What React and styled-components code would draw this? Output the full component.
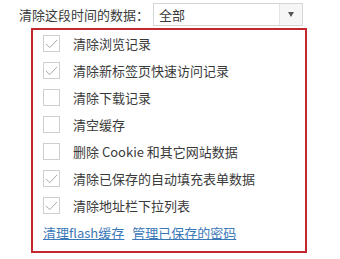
import React, { useState } from 'react';
import styled, { createGlobalStyle } from 'styled-components';

const GlobalStyle = createGlobalStyle`
  body {
    margin: 0;
    background: #fff;
    font-family: "Noto Sans CJK SC", "Noto Sans", sans-serif;
    color: #3a3a3a;
  }
`;

const Page = styled.div`
  width: 340px;
  height: 259px;
  padding-top: 3px;
  box-sizing: border-box;
`;

const RangeRow = styled.div`
  display: flex;
  align-items: center;
  height: 23px;
  padding-left: 19px;
`;

const RangeLabel = styled.span`
  font-size: 13px;
  width: 134px;
  white-space: nowrap;
`;

const Select = styled.div`
  display: flex;
  width: 150px;
  height: 23px;
  box-sizing: border-box;
  border: 1px solid #d6d6d6;
  background: #fff;
`;

const SelectValue = styled.span`
  flex: 1;
  font-size: 13px;
  line-height: 21px;
  padding-left: 5px;
`;

const SelectArrow = styled.span`
  width: 22px;
  display: flex;
  align-items: center;
  justify-content: center;
  background: #f6f6f6;
  border-left: 1px solid #e4e4e4;
  &::after {
    content: '';
    border-left: 3.5px solid transparent;
    border-right: 3.5px solid transparent;
    border-top: 5px solid #555;
  }
`;

const Panel = styled.div`
  margin: 2px 0 0 31px;
  width: 276px;
  height: 225px;
  box-sizing: border-box;
  border: 2px solid #c1272d;
  padding-left: 10px;
`;

const Row = styled.label`
  display: flex;
  align-items: center;
  height: 27px;
  font-size: 13px;
  cursor: pointer;
`;

const Box = styled.span`
  width: 17px;
  height: 17px;
  box-sizing: border-box;
  border: 1px solid #cfcfcf;
  background: #fff;
  margin-right: 13px;
  display: flex;
  align-items: center;
  justify-content: center;
`;

const Links = styled.div`
  display: flex;
  align-items: center;
  gap: 8px;
  height: 27px;
  font-size: 13px;
`;

const Link = styled.a`
  color: #3b78b8;
  text-decoration: underline;
  cursor: pointer;
`;

const items = [
  { label: '清除浏览记录', checked: true },
  { label: '清除新标签页快速访问记录', checked: true },
  { label: '清除下载记录', checked: false },
  { label: '清空缓存', checked: false },
  { label: '删除 Cookie 和其它网站数据', checked: false },
  { label: '清除已保存的自动填充表单数据', checked: true },
  { label: '清除地址栏下拉列表', checked: true },
];

const Check = () => (
  <svg width="13" height="10" viewBox="0 0 13 10">
    <path d="M1 5 L4.8 8.6 L12 1" fill="none" stroke="#a9a9a9" strokeWidth="1" />
  </svg>
);

const App = () => {
  const [checks, setChecks] = useState(items.map((i) => i.checked));

  const toggle = (index) => {
    setChecks(checks.map((c, i) => (i === index ? !c : c)));
  };

  return (
    <Page>
      <GlobalStyle />
      <RangeRow>
        <RangeLabel>清除这段时间的数据：</RangeLabel>
        <Select>
          <SelectValue>全部</SelectValue>
          <SelectArrow />
        </Select>
      </RangeRow>
      <Panel>
        {items.map((item, index) => (
          <Row key={index} onClick={() => toggle(index)}>
            <Box>{checks[index] && <Check />}</Box>
            {item.label}
          </Row>
        ))}
        <Links>
          <Link>清理flash缓存</Link>
          <Link>管理已保存的密码</Link>
        </Links>
      </Panel>
    </Page>
  );
};

export default App;
